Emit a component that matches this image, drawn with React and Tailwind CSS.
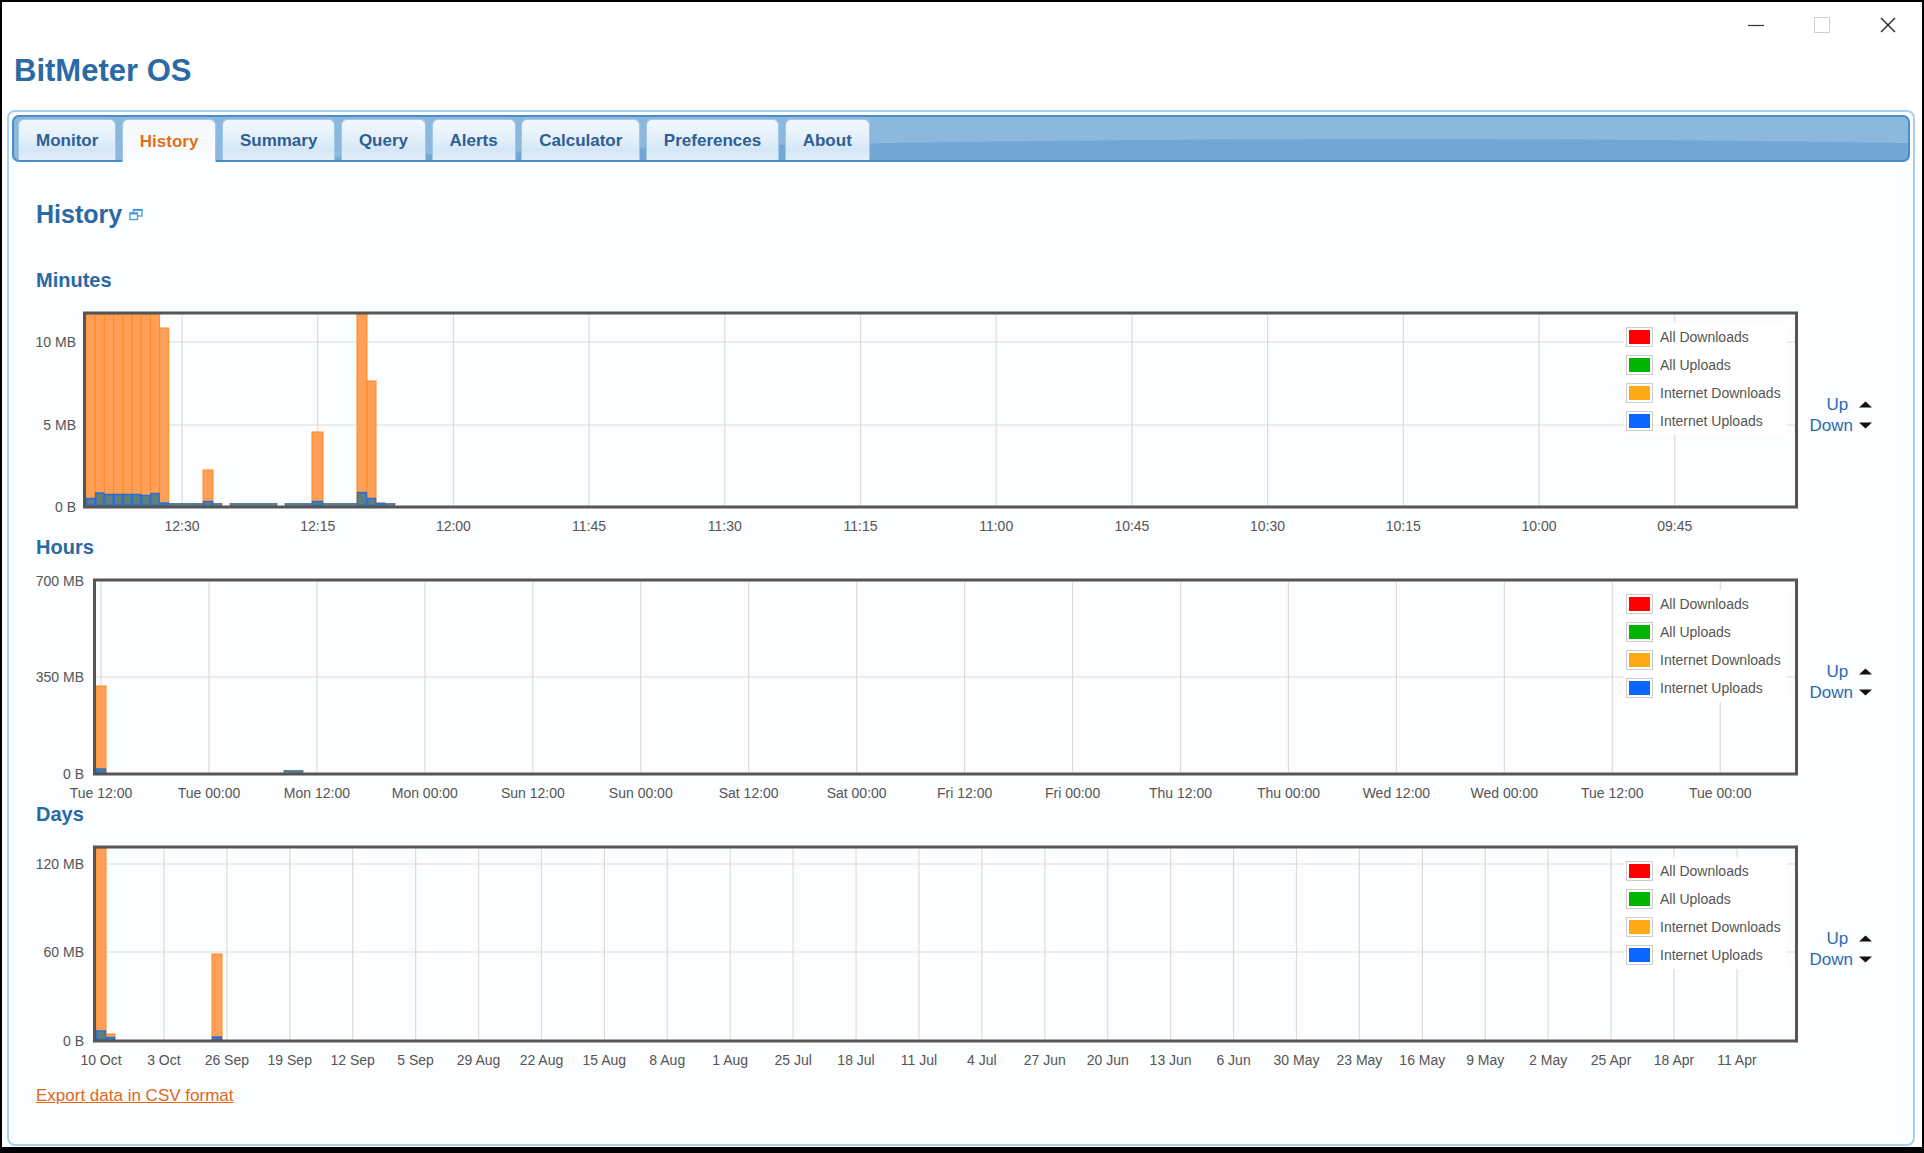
const TABS = ["Monitor", "History", "Summary", "Query", "Alerts", "Calculator", "Preferences", "About"];

const LEGEND = [
  ["#ff0000", "All Downloads"],
  ["#00b400", "All Uploads"],
  ["#ffaa14", "Internet Downloads"],
  ["#0a66ff", "Internet Uploads"],
];

const FULL = 22.5;
const ZERO = 213.5;

const O_FILL = "#ff9f58";
const O_STROKE = "#ff8a1e";
const B_FILL = "#5e7f7c";
const B_STROKE = "#2b6fd2";

// minute bars: x1, x2, orange top (svg y) or null, blue height or null
const minuteBars = [
  [50, 59.2, FULL, 7],
  [59.2, 68.4, FULL, 12.5],
  [68.4, 77.6, FULL, 11],
  [77.6, 86.8, FULL, 11],
  [86.8, 96, FULL, 11],
  [96, 105.2, FULL, 11],
  [105.2, 114.4, FULL, 10],
  [114.4, 123.6, FULL, 12],
  [123.6, 132.8, 36, 2.5],
  [167, 177, 178, 4],
  [276, 287, 140, 4],
  [321, 331, FULL, 13],
  [331, 340, 89, 7],
  [340, 349, 211, 2],
];
const minuteTraces = [
  [132.8, 161], [161, 167], [177, 186], [194, 241], [249, 276], [287, 321], [349, 359],
];

const hourBars = [[60, 70, 127, 3.5]];
const hourTraces = [[248, 267]];

const dayBars = [
  [60, 70, FULL, 8.5],
  [70, 79, 208, 2],
  [176, 186, 128, 2.5],
];

const minuteTicks = ["12:30", "12:15", "12:00", "11:45", "11:30", "11:15", "11:00", "10:45", "10:30", "10:15", "10:00", "09:45"].map(
  (l, i) => ({ l, x: 146 + 135.7 * i })
);
const hourTicks = [
  "Tue 12:00", "Tue 00:00", "Mon 12:00", "Mon 00:00", "Sun 12:00", "Sun 00:00", "Sat 12:00", "Sat 00:00",
  "Fri 12:00", "Fri 00:00", "Thu 12:00", "Thu 00:00", "Wed 12:00", "Wed 00:00", "Tue 12:00", "Tue 00:00",
].map((l, i) => ({ l, x: 65 + 107.95 * i }));
const dayTicks = [
  "10 Oct", "3 Oct", "26 Sep", "19 Sep", "12 Sep", "5 Sep", "29 Aug", "22 Aug", "15 Aug", "8 Aug", "1 Aug",
  "25 Jul", "18 Jul", "11 Jul", "4 Jul", "27 Jun", "20 Jun", "13 Jun", "6 Jun", "30 May", "23 May", "16 May",
  "9 May", "2 May", "25 Apr", "18 Apr", "11 Apr",
].map((l, i) => ({ l, x: 65 + 62.92 * i }));

function Legend() {
  return (
    <div className="absolute left-[1588px] top-[31px] bg-white/90 pl-[2px] pr-[6px]">
      {LEGEND.map(([c, label]) => (
        <div key={label} className="flex h-[28px] items-center gap-[7px]">
          <div className="h-[20px] w-[27px] border border-[#cccccc] bg-white p-[2px]">
            <div className="h-full w-full" style={{ backgroundColor: c }} />
          </div>
          <span className="text-[14px] text-[#555555]">{label}</span>
        </div>
      ))}
    </div>
  );
}

function Tri({ down }) {
  return (
    <svg width="13" height="7" viewBox="0 0 13 7" className="ml-[6px]">
      <polygon points={down ? "0,0.5 13,0.5 6.5,6.5" : "0,6.5 6.5,0.5 13,6.5"} fill="#111" />
    </svg>
  );
}

function UpDown() {
  return (
    <div className="flex w-[66px] flex-col items-end pt-[102px] text-[17px] leading-[21px] text-[#2b6cb0]">
      <div className="flex items-center">
        <span>Up{"\u00a0"}</span>
        <Tri />
      </div>
      <div className="flex items-center">
        <span>Down</span>
        <Tri down />
      </div>
    </div>
  );
}

function Chart({ plotLeft, labelX, yTicks, xTicks, bars, traces = [] }) {
  const right = 1762;
  const inL = plotLeft + 3;
  const inR = right - 3;
  return (
    <div className="flex">
      <div className="relative h-[243px] w-[1770px]">
        <svg width="1770" height="243" className="block">
          {yTicks.map((t) =>
            t.y < ZERO - 2 && t.y > FULL + 1 ? (
              <line key={t.l} x1={inL} x2={inR} y1={t.y} y2={t.y} stroke="#dcdcdc" strokeWidth="1.2" />
            ) : null
          )}
          {xTicks.map((t, i) => (
            <line key={i} x1={t.x} x2={t.x} y1={FULL} y2={ZERO} stroke="#dcdcdc" strokeWidth="1.2" />
          ))}
          {bars.map(([x1, x2, o], i) =>
            o !== null ? (
              <rect key={"o" + i} x={x1} y={o} width={x2 - x1} height={ZERO - o} fill={O_FILL} stroke={O_STROKE} strokeWidth="1" />
            ) : null
          )}
          {traces.map(([x1, x2], i) => (
            <rect key={"t" + i} x={x1} y={ZERO - 2} width={x2 - x1} height={2} fill={B_FILL} stroke="#4a6f9a" strokeWidth="0.8" />
          ))}
          {bars.map(([x1, x2, , b], i) =>
            b ? (
              <rect key={"b" + i} x={x1 + 0.5} y={ZERO - b} width={x2 - x1 - 1} height={b} fill={B_FILL} stroke={B_STROKE} strokeWidth="1.5" />
            ) : null
          )}
          <rect x={plotLeft + 1.5} y={21} width={right - plotLeft - 3} height={194} fill="none" stroke="#555555" strokeWidth="3" />
          {yTicks.map((t) => (
            <text key={t.l} x={labelX} y={t.y} dy="0.36em" textAnchor="end" fontSize="14" fill="#555555">
              {t.l}
            </text>
          ))}
          {xTicks.map((t, i) => (
            <text key={i} x={t.x} y={239} textAnchor="middle" fontSize="14" fill="#555555">
              {t.l}
            </text>
          ))}
        </svg>
        <Legend />
      </div>
      <UpDown />
    </div>
  );
}

function Section({ title, children }) {
  return (
    <div className="h-[267px]">
      <h2 className="h-[24px] text-[20px] font-bold leading-[24px] text-[#2a69a3]">{title}</h2>
      {children}
    </div>
  );
}

export default function App() {
  return (
    <div className="h-[1153px] w-[1924px] overflow-hidden border-2 border-b-[6px] border-black bg-white font-['Liberation_Sans',Arial,sans-serif]">
      <div className="h-[108px]">
        <div className="flex h-[46px] items-center justify-end gap-[50px] pr-[26px]">
          <svg width="16" height="16" viewBox="0 0 16 16">
            <line x1="0" y1="8.5" x2="16" y2="8.5" stroke="#333" strokeWidth="1.2" />
          </svg>
          <svg width="16" height="16" viewBox="0 0 16 16">
            <rect x="0.5" y="0.5" width="15" height="15" fill="none" stroke="#cfcfcf" strokeWidth="1" />
          </svg>
          <svg width="16" height="16" viewBox="0 0 16 16">
            <path d="M1 1 L15 15 M15 1 L1 15" stroke="#222" strokeWidth="1.4" />
          </svg>
        </div>
        <h1 className="mt-[6px] pl-[12px] text-[31px] font-bold leading-[34px] text-[#2b6aa5]">BitMeter OS</h1>
      </div>

      <div className="ml-[5px] h-[1036px] w-[1908px] rounded-[8px] border-2 border-[#aacfec] bg-[#fbfdfe] p-[3px]">
        <div className="flex h-[47px] items-end gap-[5.5px] rounded-[7px] border-2 border-[#4b8dcb] bg-[radial-gradient(100%_250%_at_73%_300%,#72a7d3_99%,#8cb8de_100%)] pl-[4px]">
          {TABS.map((t) =>
            t === "History" ? (
              <div
                key={t}
                className="relative z-10 mb-[-2px] flex h-[43px] items-center rounded-t-[6px] border border-b-0 border-[#a3c7e7] bg-[linear-gradient(to_bottom,#f4f8fc,#fbfdfe)] px-[17px] pt-[1px] text-[17px] font-bold text-[#e0701a]"
              >
                {t}
              </div>
            ) : (
              <div
                key={t}
                className="flex h-[41px] items-center rounded-t-[6px] border border-b-0 border-[#a3c7e7] bg-[linear-gradient(to_bottom,#f1f8fe,#e4f0fb_45%,#d4e7f7_75%,#e2effa)] px-[17px] pt-[2px] text-[17px] font-bold text-[#2d5f94]"
              >
                {t}
              </div>
            )
          )}
        </div>

        <div className="pl-[24px]">
          <div className="mt-[37px] flex h-[30px] items-center">
            <h1 className="text-[25px] font-bold leading-[30px] text-[#2a69a3]">History</h1>
            <svg width="14" height="13" viewBox="0 0 14 13" className="ml-[7px]">
              <rect x="4.5" y="1.5" width="8.5" height="6.5" fill="none" stroke="#4b9ad9" strokeWidth="1.3" />
              <rect x="4" y="1" width="9.5" height="2" fill="#4b9ad9" />
              <rect x="1" y="5" width="7.5" height="6.5" fill="#fbfdfe" stroke="#4b9ad9" strokeWidth="1.3" />
              <rect x="0.5" y="4.5" width="8.5" height="2" fill="#4b9ad9" />
            </svg>
          </div>

          <div className="mt-[39px]">
            <Section title="Minutes">
              <Chart
                plotLeft={47}
                labelX={40}
                yTicks={[
                  { l: "10 MB", y: 50 },
                  { l: "5 MB", y: 133 },
                  { l: "0 B", y: 215 },
                ]}
                xTicks={minuteTicks}
                bars={minuteBars}
                traces={minuteTraces}
              />
            </Section>
            <Section title="Hours">
              <Chart
                plotLeft={57}
                labelX={48}
                yTicks={[
                  { l: "700 MB", y: 22 },
                  { l: "350 MB", y: 118 },
                  { l: "0 B", y: 215 },
                ]}
                xTicks={hourTicks}
                bars={hourBars}
                traces={hourTraces}
              />
            </Section>
            <Section title="Days">
              <Chart
                plotLeft={57}
                labelX={48}
                yTicks={[
                  { l: "120 MB", y: 38 },
                  { l: "60 MB", y: 126 },
                  { l: "0 B", y: 215 },
                ]}
                xTicks={dayTicks}
                bars={dayBars}
              />
            </Section>
          </div>

          <a href="#" className="mt-[17px] block w-fit text-[17px] leading-[20px] text-[#e2661a] underline">
            Export data in CSV format
          </a>
        </div>
      </div>
    </div>
  );
}
